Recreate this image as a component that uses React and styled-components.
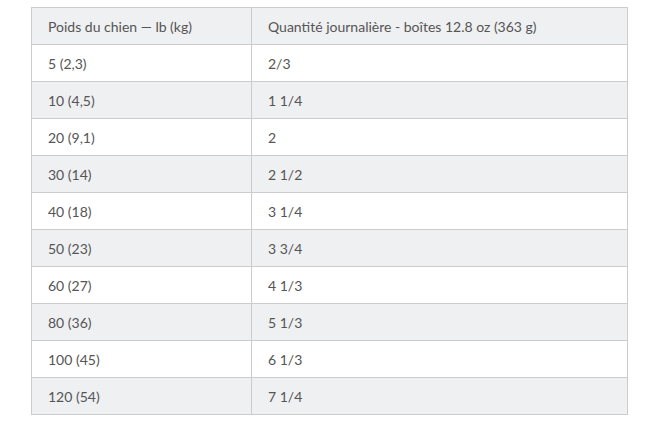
import React from "react";
import styled, { createGlobalStyle } from "styled-components";

const GlobalStyle = createGlobalStyle`
  html, body {
    margin: 0;
    padding: 0;
    background: #ffffff;
  }
  body {
    font-family: Lato, "Noto Sans", sans-serif;
  }
`;

const Page = styled.div`
  padding: 7px 33px 0 31px;
`;

const Table = styled.table`
  width: 597px;
  border-collapse: collapse;
  border: 1px solid #cccccc;
  font-size: 14px;
  color: #555555;
`;

const Row = styled.tr`
  background: ${(p) => (p.$shaded ? "#eff0f2" : "#ffffff")};
`;

const Cell = styled.td`
  height: 37px;
  box-sizing: border-box;
  padding: 0 16px;
  border: 1px solid #cccccc;
  text-align: left;
  font-weight: 400;
  vertical-align: middle;

  &:first-child {
    width: 220px;
    padding-left: 16px;
  }
`;

const HeadCell = styled(Cell).attrs({ as: "th" })``;

const rows = [
  ["5 (2,3)", "2/3"],
  ["10 (4,5)", "1 1/4"],
  ["20 (9,1)", "2"],
  ["30 (14)", "2 1/2"],
  ["40 (18)", "3 1/4"],
  ["50 (23)", "3 3/4"],
  ["60 (27)", "4 1/3"],
  ["80 (36)", "5 1/3"],
  ["100 (45)", "6 1/3"],
  ["120 (54)", "7 1/4"],
];

export default function App() {
  return (
    <Page>
      <GlobalStyle />
      <Table>
        <thead>
          <Row $shaded>
            <HeadCell>Poids du chien — lb (kg)</HeadCell>
            <HeadCell>Quantité journalière - boîtes 12.8 oz (363 g)</HeadCell>
          </Row>
        </thead>
        <tbody>
          {rows.map(([weight, amount], i) => (
            <Row key={weight} $shaded={i % 2 === 1}>
              <Cell>{weight}</Cell>
              <Cell>{amount}</Cell>
            </Row>
          ))}
        </tbody>
      </Table>
    </Page>
  );
}
